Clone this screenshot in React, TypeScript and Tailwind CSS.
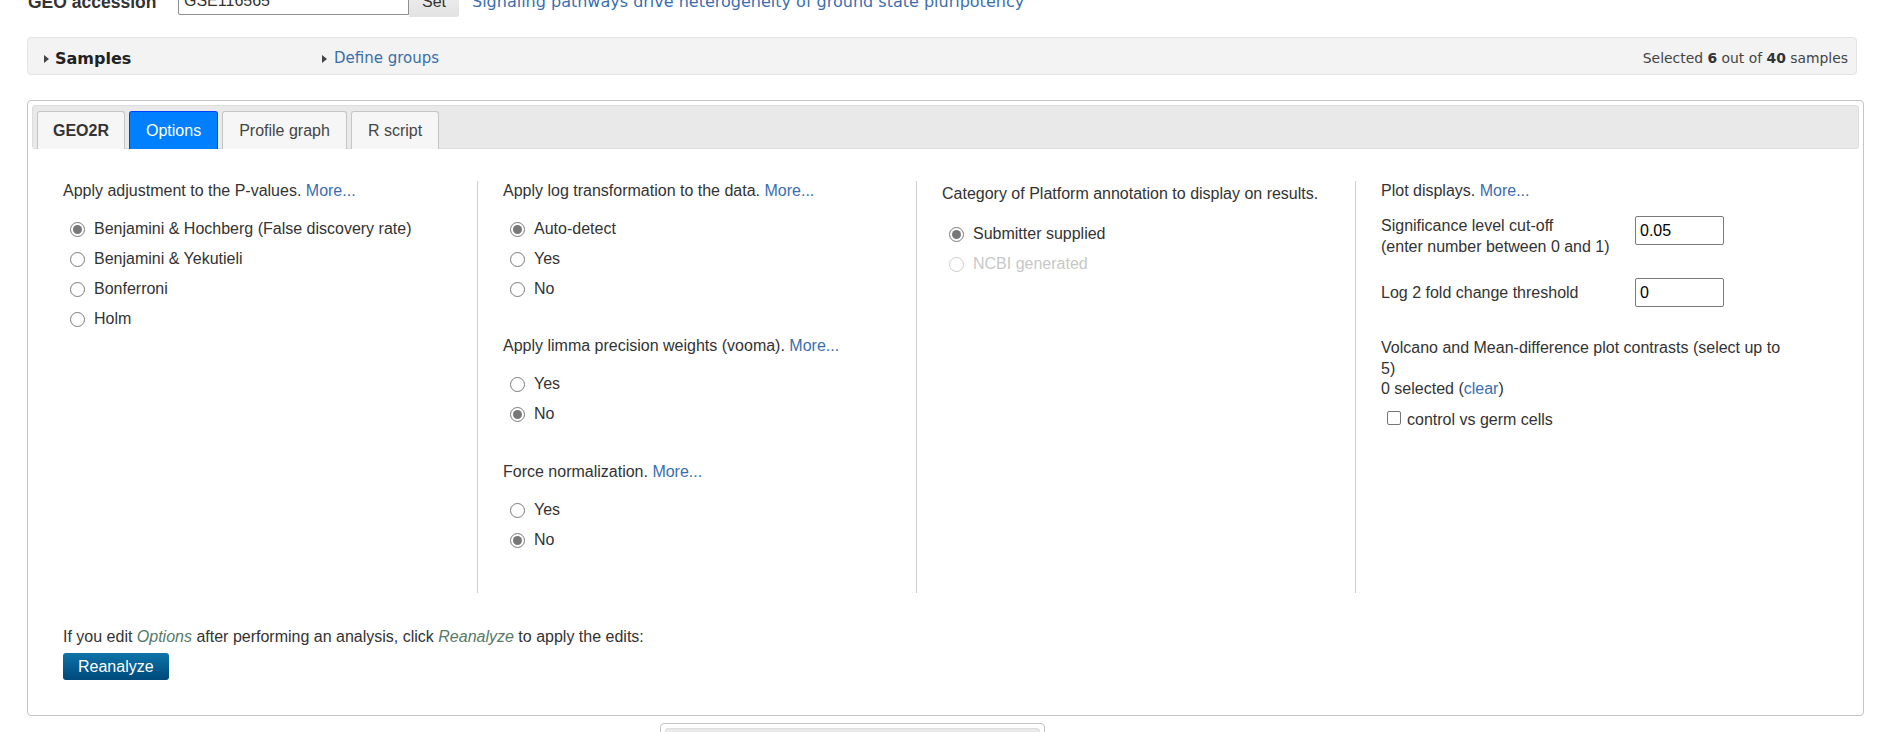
function Radio({
  label,
  checked = false,
  disabled = false,
}: {
  label: string;
  checked?: boolean;
  disabled?: boolean;
}) {
  return (
    <div className="flex items-center h-[30px] pl-[7px]">
      <span
        className={
          disabled
            ? "w-[15px] h-[15px] rounded-full border border-[#cdcdcd] bg-white flex items-center justify-center"
            : "w-[15px] h-[15px] rounded-full border border-[#7a7a7a] bg-white flex items-center justify-center"
        }
      >
        {checked && <span className="w-[9px] h-[9px] rounded-full bg-[#787878]" />}
      </span>
      <span className={disabled ? "ml-[9px] text-[#c8c8c8]" : "ml-[9px]"}>{label}</span>
    </div>
  );
}

function More() {
  return <a className="text-[#3a6eb0] cursor-pointer">More...</a>;
}

function Tab({ label, active = false, bold = false }: { label: string; active?: boolean; bold?: boolean }) {
  return (
    <div
      className={
        active
          ? "h-[38px] -mb-px px-[16px] flex items-center border border-b-0 border-[#003eff] bg-[#007fff] text-white rounded-t-[3px]"
          : bold
          ? "h-[38px] -mb-px px-[15px] flex items-center border border-b-0 border-[#c5c5c5] bg-[#f6f6f6] text-[#333] font-bold rounded-t-[3px]"
          : "h-[38px] -mb-px px-[16px] flex items-center border border-b-0 border-[#c5c5c5] bg-[#f6f6f6] text-[#454545] rounded-t-[3px]"
      }
    >
      {label}
    </div>
  );
}

export default function App() {
  return (
    <div className="min-h-screen bg-white text-[#333] text-[16px] font-['Liberation_Sans',Arial,sans-serif] overflow-hidden">
      {/* accession row, cut off at the top */}
      <div className="flex items-start mt-[-13px] pl-[28px]">
        <span className="w-[150px] leading-[30px] font-bold text-[17.5px]">GEO accession</span>
        <div className="w-[231px] h-[28px] border border-[#8f8f8f] rounded-l-[2px] pl-[5px] leading-[26px]">
          GSE116565
        </div>
        <div className="w-[50px] h-[30px] bg-linear-to-b from-[#f2f2f2] to-[#e2e2e2] rounded-r-[3px] flex items-center justify-center">
          Set
        </div>
        <a className="ml-[13px] leading-[30px] text-[#3a6eb0] text-[16px] font-['DejaVu_Sans',Verdana,sans-serif]">
          Signaling pathways drive heterogeneity of ground state pluripotency
        </a>
      </div>

      {/* samples bar */}
      <div className="mt-[20px] ml-[27px] w-[1830px] h-[38px] bg-[#f3f3f3] border border-[#e3e3e3] rounded-[4px] flex items-center pt-[5px] pl-[16px] pr-[8px] font-['DejaVu_Sans',Verdana,sans-serif]">
        <div className="w-[278px] flex items-center">
          <span className="w-0 h-0 border-y-[4px] border-y-transparent border-l-[5px] border-l-[#444]" />
          <span className="ml-[6px] font-bold text-[16px] text-[#222]">Samples</span>
        </div>
        <div className="flex items-center">
          <span className="w-0 h-0 border-y-[4px] border-y-transparent border-l-[5px] border-l-[#444]" />
          <span className="ml-[7px] text-[15px] text-[#3a6ea5]">Define groups</span>
        </div>
        <div className="ml-auto text-[13.9px] text-[#444]">
          Selected <b className="text-[#333]">6</b> out of <b className="text-[#333]">40</b> samples
        </div>
      </div>

      {/* tabs panel */}
      <div className="mt-[25px] ml-[27px] w-[1837px] border border-[#c5c5c5] rounded-[4px] p-[4px]">
        <div className="flex gap-[4px] bg-[#e9e9e9] border border-[#dddddd] rounded-[3px] pt-[5px] px-[4px]">
          <Tab label="GEO2R" bold />
          <Tab label="Options" active />
          <Tab label="Profile graph" />
          <Tab label="R script" />
        </div>

        <div className="pl-[6px] pt-[32px] pb-[31px]">
          <div className="flex">
            <div className="w-[439px] pl-[25px]">
              <p className="leading-[20px] mb-[13px]">
                Apply adjustment to the P-values. <More />
              </p>
              <Radio label="Benjamini & Hochberg (False discovery rate)" checked />
              <Radio label="Benjamini & Yekutieli" />
              <Radio label="Bonferroni" />
              <Radio label="Holm" />
            </div>

            <div className="w-[439px] border-l border-[#cfcfcf] pl-[25px] pb-[38px]">
              <p className="leading-[20px] mb-[13px]">
                Apply log transformation to the data. <More />
              </p>
              <Radio label="Auto-detect" checked />
              <Radio label="Yes" />
              <Radio label="No" />
              <p className="leading-[20px] mt-[32px] mb-[13px]">
                Apply limma precision weights (vooma). <More />
              </p>
              <Radio label="Yes" />
              <Radio label="No" checked />
              <p className="leading-[20px] mt-[33px] mb-[13px]">
                Force normalization. <More />
              </p>
              <Radio label="Yes" />
              <Radio label="No" checked />
            </div>

            <div className="w-[439px] border-l border-[#cfcfcf] pl-[25px] pt-[3px]">
              <p className="leading-[20px] mb-[15px]">Category of Platform annotation to display on results.</p>
              <Radio label="Submitter supplied" checked />
              <Radio label="NCBI generated" disabled />
            </div>

            <div className="w-[439px] border-l border-[#cfcfcf] pl-[25px]">
              <p className="leading-[20px]">
                Plot displays. <More />
              </p>
              <div className="flex items-start mt-[14px]">
                <div className="w-[254px] leading-[21px]">
                  Significance level cut-off
                  <br />
                  (enter number between 0 and 1)
                </div>
                <div className="mt-[1px] w-[89px] h-[29px] border border-[#7a7a7a] rounded-[2px] pl-[4px] leading-[27px] text-black">
                  0.05
                </div>
              </div>
              <div className="flex items-center mt-[21px]">
                <div className="w-[254px]">Log 2 fold change threshold</div>
                <div className="w-[89px] h-[29px] border border-[#7a7a7a] rounded-[2px] pl-[4px] leading-[27px] text-black">
                  0
                </div>
              </div>
              <p className="mt-[31px] leading-[20.5px]">
                Volcano and Mean-difference plot contrasts (select up to 5)
                <br />0 selected (<a className="text-[#3a6eb0]">clear</a>)
              </p>
              <div className="flex items-start mt-[10px] pl-[6px]">
                <span className="mt-[1px] w-[14px] h-[14px] border border-[#767676] rounded-[2px] bg-white" />
                <span className="ml-[6px] leading-[20px]">control vs germ cells</span>
              </div>
            </div>
          </div>

          <div className="pl-[25px] mt-[34px]">
            <p className="leading-[20px]">
              If you edit <i className="text-[#557a68]">Options</i> after performing an analysis, click{" "}
              <i className="text-[#557a68]">Reanalyze</i> to apply the edits:
            </p>
            <button className="mt-[6px] h-[27px] px-[15px] rounded-[3px] bg-linear-to-b from-[#0f74a8] to-[#00497b] text-white leading-[25px]">
              Reanalyze
            </button>
          </div>
        </div>
      </div>

      {/* next panel, cut off at the bottom */}
      <div className="mt-[7px] ml-[660px] w-[385px] h-[40px] border border-[#c5c5c5] rounded-t-[4px] p-[4px] pb-0">
        <div className="h-full bg-[#e9e9e9] border border-[#dddddd] rounded-[3px]" />
      </div>
    </div>
  );
}
